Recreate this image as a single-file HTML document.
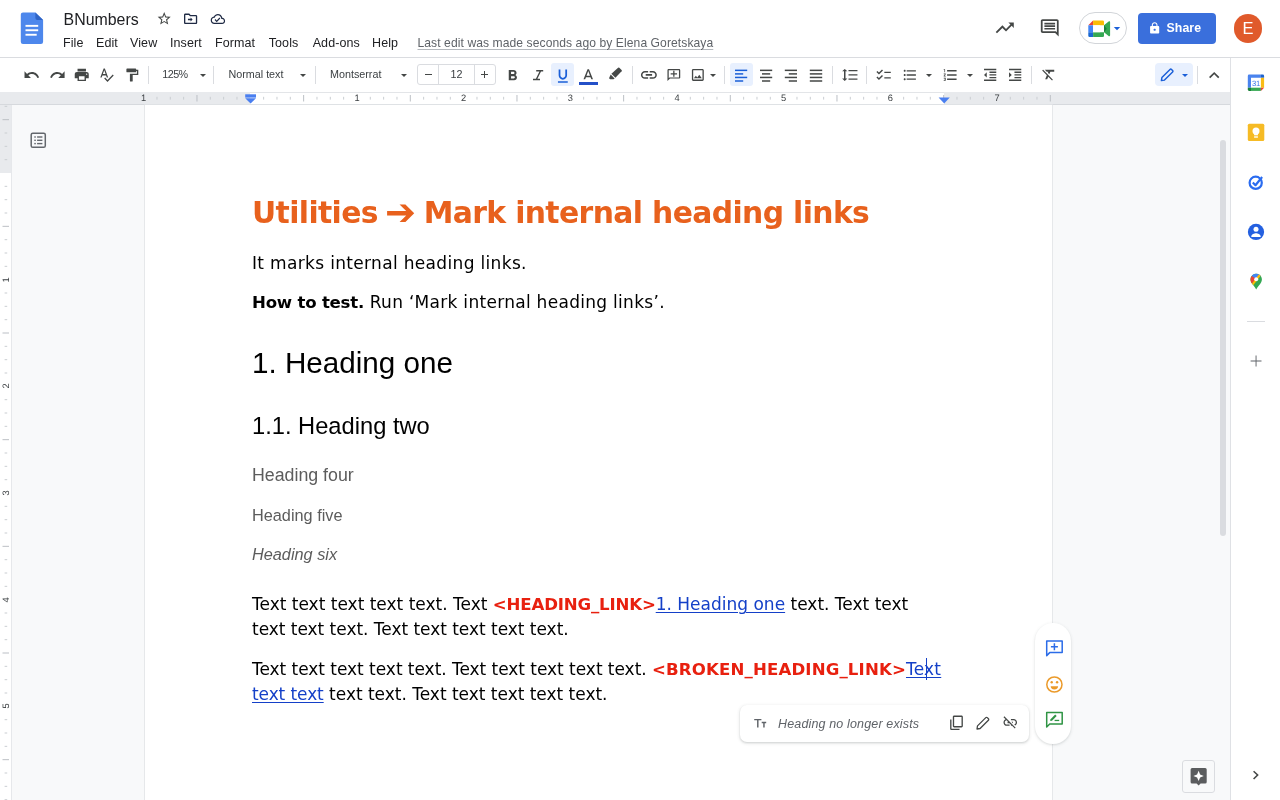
<!DOCTYPE html>
<html lang="en">
<head>
<meta charset="utf-8">
<title>BNumbers - Google Docs</title>
<style>
html,body{margin:0;padding:0;}
body{width:1280px;height:800px;overflow:hidden;position:relative;background:#f8f9fa;font-family:"Liberation Sans",sans-serif;color:#202124;}
#app{position:absolute;left:0;top:0;width:1280px;height:800px;overflow:hidden;will-change:transform;}
.abs{position:absolute;}
svg{position:absolute;overflow:visible;}
/* header */
#header{position:absolute;left:0;top:0;width:1280px;height:57px;background:#fff;border-bottom:1px solid #dadce0;}
#doctitle{position:absolute;left:63.6px;top:10px;font-size:15.9px;line-height:20px;color:#202124;white-space:nowrap;}
.menu{position:absolute;top:35px;font-size:12.5px;letter-spacing:0.1px;line-height:16px;color:#202124;white-space:nowrap;}
#lastedit{position:absolute;left:417.5px;top:35px;font-size:12.1px;letter-spacing:0.08px;line-height:16px;color:#5f6368;white-space:nowrap;text-decoration:underline;text-decoration-color:#b4b8bd;text-decoration-thickness:1.3px;text-underline-offset:2px;}
#share{position:absolute;left:1137.5px;top:12.5px;width:78.3px;height:31.8px;border-radius:4px;background:#3a6fdc;}
#share span{position:absolute;left:29px;top:7.6px;font-size:12.3px;line-height:16px;font-weight:bold;color:#fff;letter-spacing:0.1px;}
#avatar{position:absolute;left:1233.7px;top:14.2px;width:28.6px;height:28.6px;border-radius:50%;background:#e05a2b;color:#fff;font-size:16.4px;line-height:29.6px;text-align:center;}
#meet{position:absolute;left:1078.7px;top:12.4px;width:48px;height:32px;border-radius:16px;border:1px solid #d2d5d9;box-sizing:border-box;background:#fff;}
/* toolbar */
#toolbar{position:absolute;left:0;top:58px;width:1230px;height:34px;background:#fff;}
.tsep{position:absolute;top:8px;width:1px;height:18px;background:#dadce0;}
.ttext{position:absolute;top:9px;font-size:10.75px;line-height:14px;color:#3c4043;white-space:nowrap;}
.caret{position:absolute;top:15.8px;width:0;height:0;border-left:3.2px solid transparent;border-right:3.2px solid transparent;border-top:3.4px solid #444746;}
.hl{position:absolute;top:4px;height:26px;border-radius:3px;background:#e8f0fe;}
#sizebox{position:absolute;left:417px;top:6px;width:79px;height:21px;box-sizing:border-box;border:1px solid #dadce0;border-radius:3px;}
#sizebox i{position:absolute;top:0;width:1px;height:19px;background:#dadce0;}
/* ruler */
#ruler{position:absolute;left:0;top:91.7px;width:1230px;height:12px;background:#e8eaed;border-bottom:1px solid #d6d9dd;}
#rulerwhite{position:absolute;left:250.3px;top:0;width:694px;height:11.2px;background:#fff;border-top:0.8px solid #e3e5e8;}
.rnum{text-rendering:geometricPrecision;position:absolute;top:92.4px;font-size:9.3px;line-height:12px;color:#3c4043;width:20px;text-align:center;}
.vnum{text-rendering:geometricPrecision;position:absolute;left:-4.2px;width:20px;height:20px;font-size:9.3px;line-height:20px;color:#3c4043;text-align:center;transform:rotate(-90deg);}
/* vertical ruler */
#vruler{position:absolute;left:0;top:104.5px;width:11px;height:696px;background:#fff;border-right:1.4px solid #e6e8eb;}
#vrulergray{position:absolute;left:0;top:0;width:11px;height:68.4px;background:#e8eaed;}
/* page */
#page{position:absolute;left:145px;top:105px;width:906.6px;height:695px;background:#fff;box-shadow:0 0 0 0.8px #e2e4e7;}
.doc{position:absolute;left:107px;white-space:nowrap;color:#000;}
.mont{font-family:"DejaVu Sans","Liberation Sans",sans-serif;font-size:17px;line-height:24px;}
.montb{font-family:"DejaVu Sans Condensed","DejaVu Sans","Liberation Sans",sans-serif;font-weight:bold;}
.montw{font-family:"DejaVu Sans","Liberation Sans",sans-serif;font-weight:bold;font-size:16.6px;}
.arial{font-family:"Liberation Sans",sans-serif;}
.red{color:#e8200f;}
.lnk{color:#1440c8;text-decoration:underline;text-decoration-thickness:1px;text-underline-offset:2px;}
/* side panel */
#side{position:absolute;left:1230px;top:58px;width:50px;height:742px;background:#fff;border-left:1px solid #dfe1e5;box-sizing:border-box;}
#scroll{position:absolute;left:1219.6px;top:139.8px;width:6.8px;height:395.8px;border-radius:4px;background:#dadce0;}
#linkpop{position:absolute;left:740px;top:704.500px;width:289px;height:37px;border-radius:7px;background:#fff;box-shadow:0 1px 3px 1px rgba(60,64,67,.10),0 1px 2px rgba(60,64,67,.14);}
#linkpop span{position:absolute;left:38px;top:11.3px;font-size:12.500px;line-height:16px;font-style:italic;color:#5f6368;white-space:nowrap;letter-spacing:0.15px;}
#pill{position:absolute;left:1035px;top:623px;width:36px;height:121px;border-radius:18px;background:#fff;box-shadow:0 1px 3px 1px rgba(60,64,67,.07),0 1px 2px rgba(60,64,67,.10);}
#explore{position:absolute;left:1181.9px;top:760px;width:33px;height:33px;box-sizing:border-box;border:1px solid #dadce0;border-radius:3px;background:#f8f9fa;}
</style>
</head>
<body>
<div id="app">

<div id="header">
  <div id="doctitle">BNumbers</div>
  <div class="menu" style="left:63px">File</div>
  <div class="menu" style="left:96px">Edit</div>
  <div class="menu" style="left:130px">View</div>
  <div class="menu" style="left:170px">Insert</div>
  <div class="menu" style="left:215px">Format</div>
  <div class="menu" style="left:268.7px">Tools</div>
  <div class="menu" style="left:312.7px">Add-ons</div>
  <div class="menu" style="left:372px">Help</div>
  <div id="lastedit">Last edit was made seconds ago by Elena Goretskaya</div>
  <div id="meet"></div>
  <div id="share"><span>Share</span></div>
  <div id="avatar">E</div>
</div>

<div id="toolbar">
  <div class="hl" style="left:551px;top:5px;width:23px;height:23px;"></div>
  <div class="hl" style="left:730px;top:5px;width:23px;height:23px;"></div>
  <div class="hl" style="left:1155px;top:5px;width:38px;height:23px;border-radius:4px;"></div>
  <div class="tsep" style="left:148px"></div>
  <div class="ttext" style="left:162.2px;letter-spacing:-0.5px">125%</div>
  <div class="caret" style="left:199.5px"></div>
  <div class="tsep" style="left:213px"></div>
  <div class="ttext" style="left:228.5px">Normal text</div>
  <div class="caret" style="left:300px"></div>
  <div class="tsep" style="left:315px"></div>
  <div class="ttext" style="left:330px">Montserrat</div>
  <div class="caret" style="left:401.2px"></div>
  <div id="sizebox"><i style="left:20.3px"></i><i style="left:56.3px"></i></div>
  <div class="abs" style="left:424.6px;top:16px;width:7px;height:1.3px;background:#444746;"></div>
  <div class="ttext" style="left:450.6px">12</div>
  <div class="abs" style="left:481.2px;top:16px;width:6.8px;height:1.3px;background:#444746;"></div>
  <div class="abs" style="left:483.95px;top:13.2px;width:1.3px;height:6.8px;background:#444746;"></div>
  <div class="abs" style="left:578.8px;top:23.8px;width:19.2px;height:3px;background:#2450c8;"></div>
  <div class="tsep" style="left:632px"></div>
  <div class="caret" style="left:709.7px"></div>
  <div class="tsep" style="left:724px"></div>
  <div class="tsep" style="left:832px"></div>
  <div class="tsep" style="left:866px"></div>
  <div class="caret" style="left:925.7px"></div>
  <div class="caret" style="left:966.8px"></div>
  <div class="tsep" style="left:1031px"></div>
  <div class="caret" style="left:1181.6px;border-top-color:#1a5fd8;"></div>
  <div class="tsep" style="left:1197px"></div>
</div>

<div id="ruler"><div id="rulerwhite"></div></div>
<div id="vruler"><div id="vrulergray"></div></div>

<div id="page">
  <div class="doc montw" style="top:88px;font-size:29.8px;line-height:40px;color:#e8611d;letter-spacing:-0.62px;">Utilities <span style="font-size:37px;line-height:0;letter-spacing:0;margin:0 -2.2px 0 -2.6px;position:relative;top:1.5px;">➔</span> Mark internal heading links</div>
  <div class="doc mont" style="top:146px;letter-spacing:0.33px;">It marks internal heading links.</div>
  <div class="doc mont" style="top:185px;"><span class="montw" style="letter-spacing:-0.23px;">How to test.</span><span style="letter-spacing:0.29px;"> Run ‘Mark internal heading links’.</span></div>
  <div class="doc arial" style="top:240px;font-size:29.63px;line-height:36px;">1. Heading one</div>
  <div class="doc arial" style="top:306px;font-size:23.7px;line-height:30px;">1.1. Heading two</div>
  <div class="doc arial" style="top:358px;font-size:17.78px;line-height:24px;color:#5c5c5c;">Heading four</div>
  <div class="doc arial" style="top:399px;font-size:16.3px;line-height:22px;color:#5c5c5c;">Heading five</div>
  <div class="doc arial" style="top:438px;font-size:16.3px;line-height:22px;color:#5c5c5c;font-style:italic;">Heading six</div>
  <div class="doc mont" style="top:487px;"><span>Text text text text text. Text </span><span class="montw red" style="letter-spacing:-0.16px;">&lt;HEADING_LINK&gt;</span><span class="lnk">1. Heading one</span><span> text. Text text</span></div>
  <div class="doc mont" style="top:512px;letter-spacing:-0.03px;">text text text. Text text text text text.</div>
  <div class="doc mont" style="top:552px;"><span style="letter-spacing:-0.039px;">Text text text text text. Text text text text text. </span><span class="montw red" style="letter-spacing:0.14px;">&lt;BROKEN_HEADING_LINK&gt;</span><span class="lnk" style="letter-spacing:0.22px;">Text</span></div>
  <div class="doc mont" style="top:577px;"><span class="lnk" style="letter-spacing:-0.09px;">text text</span><span style="letter-spacing:-0.015px;"> text text. Text text text text text.</span></div>
  <div class="abs" style="left:780.8px;top:553.4px;width:1.2px;height:21.5px;background:#1440c8;"></div>
</div>

<svg id="rticks" width="1280" height="800" viewBox="0 0 1280 800" style="left:0;top:0;pointer-events:none;"><rect x="156.47" y="96.8" width="1" height="2.8" fill="#caced2"/><rect x="169.80" y="96.8" width="1" height="2.8" fill="#caced2"/><rect x="183.13" y="96.8" width="1" height="2.8" fill="#caced2"/><rect x="196.47" y="95" width="1" height="6.5" fill="#bcc0c5"/><rect x="209.80" y="96.8" width="1" height="2.8" fill="#caced2"/><rect x="223.13" y="96.8" width="1" height="2.8" fill="#caced2"/><rect x="236.47" y="96.8" width="1" height="2.8" fill="#caced2"/><rect x="263.13" y="96.8" width="1" height="2.8" fill="#caced2"/><rect x="276.47" y="96.8" width="1" height="2.8" fill="#caced2"/><rect x="289.80" y="96.8" width="1" height="2.8" fill="#caced2"/><rect x="303.13" y="95" width="1" height="6.5" fill="#bcc0c5"/><rect x="316.47" y="96.8" width="1" height="2.8" fill="#caced2"/><rect x="329.80" y="96.8" width="1" height="2.8" fill="#caced2"/><rect x="343.13" y="96.8" width="1" height="2.8" fill="#caced2"/><rect x="369.80" y="96.8" width="1" height="2.8" fill="#caced2"/><rect x="383.13" y="96.8" width="1" height="2.8" fill="#caced2"/><rect x="396.47" y="96.8" width="1" height="2.8" fill="#caced2"/><rect x="409.80" y="95" width="1" height="6.5" fill="#bcc0c5"/><rect x="423.13" y="96.8" width="1" height="2.8" fill="#caced2"/><rect x="436.47" y="96.8" width="1" height="2.8" fill="#caced2"/><rect x="449.80" y="96.8" width="1" height="2.8" fill="#caced2"/><rect x="476.47" y="96.8" width="1" height="2.8" fill="#caced2"/><rect x="489.80" y="96.8" width="1" height="2.8" fill="#caced2"/><rect x="503.13" y="96.8" width="1" height="2.8" fill="#caced2"/><rect x="516.47" y="95" width="1" height="6.5" fill="#bcc0c5"/><rect x="529.80" y="96.8" width="1" height="2.8" fill="#caced2"/><rect x="543.13" y="96.8" width="1" height="2.8" fill="#caced2"/><rect x="556.47" y="96.8" width="1" height="2.8" fill="#caced2"/><rect x="583.13" y="96.8" width="1" height="2.8" fill="#caced2"/><rect x="596.47" y="96.8" width="1" height="2.8" fill="#caced2"/><rect x="609.80" y="96.8" width="1" height="2.8" fill="#caced2"/><rect x="623.13" y="95" width="1" height="6.5" fill="#bcc0c5"/><rect x="636.47" y="96.8" width="1" height="2.8" fill="#caced2"/><rect x="649.80" y="96.8" width="1" height="2.8" fill="#caced2"/><rect x="663.13" y="96.8" width="1" height="2.8" fill="#caced2"/><rect x="689.80" y="96.8" width="1" height="2.8" fill="#caced2"/><rect x="703.13" y="96.8" width="1" height="2.8" fill="#caced2"/><rect x="716.47" y="96.8" width="1" height="2.8" fill="#caced2"/><rect x="729.80" y="95" width="1" height="6.5" fill="#bcc0c5"/><rect x="743.13" y="96.8" width="1" height="2.8" fill="#caced2"/><rect x="756.47" y="96.8" width="1" height="2.8" fill="#caced2"/><rect x="769.80" y="96.8" width="1" height="2.8" fill="#caced2"/><rect x="796.47" y="96.8" width="1" height="2.8" fill="#caced2"/><rect x="809.80" y="96.8" width="1" height="2.8" fill="#caced2"/><rect x="823.14" y="96.8" width="1" height="2.8" fill="#caced2"/><rect x="836.47" y="95" width="1" height="6.5" fill="#bcc0c5"/><rect x="849.80" y="96.8" width="1" height="2.8" fill="#caced2"/><rect x="863.14" y="96.8" width="1" height="2.8" fill="#caced2"/><rect x="876.47" y="96.8" width="1" height="2.8" fill="#caced2"/><rect x="903.14" y="96.8" width="1" height="2.8" fill="#caced2"/><rect x="916.47" y="96.8" width="1" height="2.8" fill="#caced2"/><rect x="929.80" y="96.8" width="1" height="2.8" fill="#caced2"/><rect x="943.14" y="95" width="1" height="6.5" fill="#bcc0c5"/><rect x="956.47" y="96.8" width="1" height="2.8" fill="#caced2"/><rect x="969.80" y="96.8" width="1" height="2.8" fill="#caced2"/><rect x="983.14" y="96.8" width="1" height="2.8" fill="#caced2"/><rect x="1009.80" y="96.8" width="1" height="2.8" fill="#caced2"/><rect x="1023.14" y="96.8" width="1" height="2.8" fill="#caced2"/><rect x="1036.47" y="96.8" width="1" height="2.8" fill="#caced2"/><rect x="1049.80" y="95" width="1" height="6.5" fill="#bcc0c5"/><rect x="4.6" y="105.83" width="2.6" height="1" fill="#caced2"/><rect x="2.5" y="119.17" width="6.5" height="1" fill="#bcc0c5"/><rect x="4.6" y="132.50" width="2.6" height="1" fill="#caced2"/><rect x="4.6" y="145.83" width="2.6" height="1" fill="#caced2"/><rect x="4.6" y="159.17" width="2.6" height="1" fill="#caced2"/><rect x="4.6" y="185.83" width="2.6" height="1" fill="#caced2"/><rect x="4.6" y="199.17" width="2.6" height="1" fill="#caced2"/><rect x="4.6" y="212.50" width="2.6" height="1" fill="#caced2"/><rect x="2.5" y="225.83" width="6.5" height="1" fill="#bcc0c5"/><rect x="4.6" y="239.17" width="2.6" height="1" fill="#caced2"/><rect x="4.6" y="252.50" width="2.6" height="1" fill="#caced2"/><rect x="4.6" y="265.83" width="2.6" height="1" fill="#caced2"/><rect x="4.6" y="292.50" width="2.6" height="1" fill="#caced2"/><rect x="4.6" y="305.83" width="2.6" height="1" fill="#caced2"/><rect x="4.6" y="319.17" width="2.6" height="1" fill="#caced2"/><rect x="2.5" y="332.50" width="6.5" height="1" fill="#bcc0c5"/><rect x="4.6" y="345.83" width="2.6" height="1" fill="#caced2"/><rect x="4.6" y="359.17" width="2.6" height="1" fill="#caced2"/><rect x="4.6" y="372.50" width="2.6" height="1" fill="#caced2"/><rect x="4.6" y="399.17" width="2.6" height="1" fill="#caced2"/><rect x="4.6" y="412.50" width="2.6" height="1" fill="#caced2"/><rect x="4.6" y="425.83" width="2.6" height="1" fill="#caced2"/><rect x="2.5" y="439.17" width="6.5" height="1" fill="#bcc0c5"/><rect x="4.6" y="452.50" width="2.6" height="1" fill="#caced2"/><rect x="4.6" y="465.83" width="2.6" height="1" fill="#caced2"/><rect x="4.6" y="479.17" width="2.6" height="1" fill="#caced2"/><rect x="4.6" y="505.83" width="2.6" height="1" fill="#caced2"/><rect x="4.6" y="519.17" width="2.6" height="1" fill="#caced2"/><rect x="4.6" y="532.50" width="2.6" height="1" fill="#caced2"/><rect x="2.5" y="545.83" width="6.5" height="1" fill="#bcc0c5"/><rect x="4.6" y="559.17" width="2.6" height="1" fill="#caced2"/><rect x="4.6" y="572.50" width="2.6" height="1" fill="#caced2"/><rect x="4.6" y="585.83" width="2.6" height="1" fill="#caced2"/><rect x="4.6" y="612.50" width="2.6" height="1" fill="#caced2"/><rect x="4.6" y="625.83" width="2.6" height="1" fill="#caced2"/><rect x="4.6" y="639.17" width="2.6" height="1" fill="#caced2"/><rect x="2.5" y="652.50" width="6.5" height="1" fill="#bcc0c5"/><rect x="4.6" y="665.83" width="2.6" height="1" fill="#caced2"/><rect x="4.6" y="679.17" width="2.6" height="1" fill="#caced2"/><rect x="4.6" y="692.50" width="2.6" height="1" fill="#caced2"/><rect x="4.6" y="719.17" width="2.6" height="1" fill="#caced2"/><rect x="4.6" y="732.50" width="2.6" height="1" fill="#caced2"/><rect x="4.6" y="745.84" width="2.6" height="1" fill="#caced2"/><rect x="2.5" y="759.17" width="6.5" height="1" fill="#bcc0c5"/><rect x="4.6" y="772.50" width="2.6" height="1" fill="#caced2"/><rect x="4.6" y="785.84" width="2.6" height="1" fill="#caced2"/><rect x="4.6" y="799.17" width="2.6" height="1" fill="#caced2"/></svg>
<div class="rnum" style="left:133.6px">1</div>
<div class="rnum" style="left:347.0px">1</div>
<div class="rnum" style="left:453.6px">2</div>
<div class="rnum" style="left:560.3px">3</div>
<div class="rnum" style="left:667.0px">4</div>
<div class="rnum" style="left:773.6px">5</div>
<div class="rnum" style="left:880.3px">6</div>
<div class="rnum" style="left:987.0px">7</div>
<div class="vnum" style="top:269.7px">1</div>
<div class="vnum" style="top:376.3px">2</div>
<div class="vnum" style="top:483.0px">3</div>
<div class="vnum" style="top:589.7px">4</div>
<div class="vnum" style="top:696.3px">5</div>
<div id="scroll"></div>
<div id="side"></div>
<!-- link popup + floating pill + explore (HTML boxes) -->
<div id="linkpop"><span>Heading no longer exists</span></div>
<div id="pill"></div>
<div id="explore"></div>
<div class="abs" style="left:1247px;top:321px;width:18px;height:1px;background:#dadce0;"></div>

<svg id="icons" width="1280" height="800" viewBox="0 0 1280 800" style="left:0;top:0;pointer-events:none;">
<path d="M12.5 8c-2.65 0-5.05.99-6.9 2.6L2 7v9h9l-3.62-3.62c1.39-1.16 3.16-1.88 5.12-1.88 3.54 0 6.55 2.31 7.6 5.5l2.37-.78C21.08 11.03 17.15 8 12.5 8z" fill="#444746" transform="translate(31.80 74.65) scale(0.7115 0.7361) translate(-12.235 -11.500)"/>
<path d="M18.4 10.6C16.55 8.99 14.15 8 11.5 8c-4.65 0-8.58 3.03-9.96 7.22L3.9 16c1.05-3.19 4.05-5.5 7.6-5.5 1.95 0 3.73.72 5.12 1.88L13 16h9V7l-3.6 3.6z" fill="#444746" transform="translate(57.40 74.65) scale(0.7039 0.7342) translate(-11.770 -11.500)"/>
<path d="M19 8H5c-1.66 0-3 1.34-3 3v6h4v4h12v-4h4v-6c0-1.66-1.34-3-3-3zm-3 11H8v-5h8v5zm3-7c-.55 0-1-.45-1-1s.45-1 1-1 1 .45 1 1-.45 1-1 1zm-1-9H6v4h12V3z" fill="#444746" transform="translate(81.75 74.85) scale(0.7006 0.6876) translate(-12.000 -12.000)"/>
<path d="M12.45 16h2.09L9.43 3H7.57L2.46 16h2.09l1.12-3h5.64l1.14 3zm-6.02-5L8.5 5.48 10.57 11H6.43zm15.16.59l-8.09 8.09L9.830 16l-1.410 1.410 5.090 5.090L23 13l-1.410-1.410z" fill="#444746" transform="translate(107.00 75.25) scale(0.6524 0.6822) translate(-12.730 -12.750)"/>
<path d="M18 4V3c0-.55-.45-1-1-1H5c-.55 0-1 .45-1 1v4c0 .55.45 1 1 1h12c.55 0 1-.45 1-1V6h1v4H9v11c0 .55.45 1 1 1h2c.55 0 1-.45 1-1v-9h8V4h-3z" fill="#444746" transform="translate(132.35 75.00) scale(0.6991 0.6621) translate(-12.500 -12.000)"/>
<path d="M15.6 10.79c.97-.67 1.65-1.77 1.65-2.79 0-2.26-1.75-4-4-4H7v14h7.040c2.090 0 3.710-1.700 3.710-3.790 0-1.520-.860-2.820-2.150-3.420zM10 6.500h3c.830 0 1.500.670 1.500 1.500s-.670 1.500-1.500 1.500h-3v-3zm3.500 9H10v-3h3.500c.830 0 1.500.670 1.500 1.500s-.670 1.500-1.500 1.500z" fill="#444746" transform="translate(512.85 75.10) scale(0.7633 0.7371) translate(-12.375 -11.000)"/>
<path d="M12 17c3.310 0 6-2.690 6-6V3h-2.500v8c0 1.930-1.570 3.500-3.500 3.500S8.500 12.930 8.500 11V3H6v8c0 3.310 2.690 6 6 6zm-7 2v2h14v-2H5z" fill="#1a5fd8" transform="translate(562.85 76.10) scale(0.7008 0.7251) translate(-12.000 -12.000)"/>
<path d="M11 3L5.500 17h2.250l1.120-3h6.250l1.120 3h2.250L13 3h-2zm-1.380 9L12 5.670 14.380 12H9.620z" fill="#444746" transform="translate(588.25 74.25) scale(0.7293 0.7234) translate(-11.995 -10.000)"/>
<path d="M3.900 12c0-1.710 1.390-3.100 3.100-3.100h4V7H7c-2.760 0-5 2.240-5 5s2.240 5 5 5h4v-1.900H7c-1.710 0-3.100-1.390-3.100-3.100zM8 13h8v-2H8v2zm9-6h-4v1.900h4c1.710 0 3.100 1.390 3.100 3.100s-1.390 3.100-3.100 3.100h-4V17h4c2.760 0 5-2.240 5-5s-2.240-5-5-5z" fill="#444746" transform="translate(648.90 74.90) scale(0.7960 0.7840) translate(-12.000 -12.000)"/>
<path d="M22 4c0-1.100-.9-2-2-2H4c-1.100 0-2 .9-2 2v12c0 1.100.9 2 2 2h14l4 4V4zm-2 13.170L18.830 16H4V4h16v13.170zM13 5h-2v4H7v2h4v4h2v-4h4V9h-4z" fill="#444746" transform="translate(673.85 75.00) scale(-0.6395 0.5945) translate(-12.000 -12.000)"/>
<path d="M19 5v14H5V5h14m0-2H5c-1.100 0-2 .9-2 2v14c0 1.100.9 2 2 2h14c1.100 0 2-.9 2-2V5c0-1.100-.9-2-2-2zm-4.860 8.860l-3 3.870L9 13.140 6 17h12l-3.860-5.140z" fill="#444746" transform="translate(697.85 74.90) scale(0.6622 0.6656) translate(-12.000 -12.000)"/>
<path d="M6 7h2.500L5 3.500 1.500 7H4v10H1.500L5 20.500 8.500 17H6V7zm4-2v2h12V5H10zm0 14h12v-2H10v2zm0-6h12v-2H10v2z" fill="#444746" transform="translate(849.80 74.90) scale(0.7473 0.7072) translate(-11.750 -12.000)"/>
<path d="M22 7h-9v2h9V7zm0 8h-9v2h9v-2zM5.540 11L2 7.460l1.410-1.410 2.120 2.120 4.240-4.240 1.410 1.410L5.540 11zm0 8L2 15.460l1.410-1.410 2.120 2.120 4.240-4.240 1.410 1.410L5.540 19z" fill="#444746" transform="translate(883.60 74.70) scale(0.7192 0.6873) translate(-12.000 -11.465)"/>
<path d="M4 10.500c-.830 0-1.500.670-1.500 1.500s.670 1.500 1.500 1.500 1.500-.670 1.500-1.500-.670-1.500-1.500-1.500zm0-6c-.830 0-1.500.670-1.500 1.500S3.170 7.500 4 7.500 5.500 6.830 5.500 6 4.830 4.500 4 4.500zm0 12c-.830 0-1.500.680-1.500 1.500s.680 1.500 1.500 1.500 1.500-.680 1.500-1.500-.670-1.500-1.500-1.500zM7 19h14v-2H7v2zm0-6h14v-2H7v2zm0-8v2h14V5H7z" fill="#444746" transform="translate(909.80 75.00) scale(0.6600 0.6948) translate(-11.750 -12.000)"/>
<path d="M2 17h2v.5H3v1h1v.5H2v1h3v-4H2v1zm1-9h1V4H2v1h1v3zm-1 3h1.800L2 13.100v.9h3v-1H3.200L5 10.900V10H2v1zm5-6v2h14V5H7zm0 14h14v-2H7v2zm0-6h14v-2H7v2z" fill="#444746" transform="translate(950.15 75.00) scale(0.6771 0.7035) translate(-11.500 -12.000)"/>
<path d="M11 17h10v-2H11v2zm-8-5l4 4V8l-4 4zm0 9h18v-2H3v2zM3 3v2h18V3H3zm8 6h10V7H11v2zm0 4h10v-2H11v2z" fill="#444746" transform="translate(990.15 74.90) scale(0.6800 0.6700) translate(-12.000 -12.000)"/>
<path d="M3 21h18v-2H3v2zM3 8v8l4-4-4-4zm8 9h10v-2H11v2zM3 3v2h18V3H3zm8 6h10V7H11v2zm0 4h10v-2H11v2z" fill="#444746" transform="translate(1015.15 74.90) scale(0.6800 0.6700) translate(-12.000 -12.000)"/>
<path d="M3.270 5L2 6.270l6.970 6.970L6.500 19h3l1.570-3.660L16.730 21 18 19.730 3.550 5.270 3.270 5zM6 5v.180L8.820 8h2.400l-.720 1.680 2.100 2.100L14.210 8H20V5H6z" fill="#444746" transform="translate(1048.20 75.10) scale(0.6708 0.6833) translate(-11.000 -13.000)"/>
<path d="M12 8l-6 6 1.410 1.410L12 10.830l4.590 4.580L18 14z" fill="#444746" transform="translate(1214.20 75.10) scale(0.8606 0.8426) translate(-12.000 -11.705)"/>
<path d="M22 9.240l-7.190-.620L12 2 9.190 8.630 2 9.240l5.460 4.730L5.820 21 12 17.270 18.180 21l-1.630-7.030L22 9.240zM12 15.400l-3.760 2.270 1-4.280-3.320-2.880 4.380-.380L12 6.100l1.710 4.040 4.380.380-3.320 2.880 1 4.280L12 15.400z" fill="#444746" transform="translate(164.20 18.30) scale(0.6526 0.6605) translate(-12.000 -11.500)"/>
<path d="M20 6h-8l-2-2H4c-1.100 0-2 .9-2 2v12c0 1.100.9 2 2 2h16c1.100 0 2-.9 2-2V8c0-1.100-.9-2-2-2zm0 12H4V6h5.170l2 2H20v10zm-7.990-2.010L12 14H8v-2h4.010v-2L15 13l-2.990 2.990z" fill="#1f2a44" transform="translate(190.60 18.85) scale(0.6592 0.6570) translate(-12.000 -12.000)"/>
<path d="M19.350 10.040C18.670 6.590 15.640 4 12 4 9.110 4 6.600 5.640 5.350 8.040 2.340 8.360 0 10.910 0 14c0 3.310 2.690 6 6 6h13c2.760 0 5-2.240 5-5 0-2.640-2.050-4.780-4.650-4.960zM19 18H6c-2.210 0-4-1.790-4-4 0-2.050 1.530-3.760 3.560-3.970l1.070-.110.500-.950C8.080 7.140 9.940 6 12 6c2.620 0 4.880 1.860 5.390 4.430l.300 1.500 1.530.110c1.560.100 2.780 1.410 2.780 2.960 0 1.650-1.350 3-3 3zm-9-3.820l-2.090-2.090L6.500 13.500 10 17l6.010-6.010-1.410-1.410z" fill="#1f2a44" transform="translate(217.90 19.05) scale(0.5995 0.6232) translate(-12.000 -12.000)"/>
<path d="M16 6l2.290 2.290-4.880 4.880-4-4L2 16.590 3.410 18l6-6 4 4 6.300-6.290L22 12V6z" fill="#444746" transform="translate(1004.75 27.90) scale(0.9040 0.9010) translate(-12.000 -12.000)"/>
<path d="M21.990 4c0-1.100-.890-2-1.990-2H4c-1.100 0-2 .9-2 2v12c0 1.100.9 2 2 2h14l4 4-.010-18zM20 4v13.170L18.830 16H4V4h16zM6 12h12v2H6zm0-3h12v2H6zm0-3h12v2H6z" fill="#444746" transform="translate(1049.75 27.90) scale(0.8918 0.8528) translate(-12.000 -12.000)"/>
<path d="M18 8h-1V6c0-2.760-2.240-5-5-5S7 3.240 7 6v2H6c-1.100 0-2 .9-2 2v10c0 1.100.9 2 2 2h12c1.100 0 2-.9 2-2V10c0-1.100-.9-2-2-2zm-6 9c-1.100 0-2-.9-2-2s.9-2 2-2 2 .9 2 2-.9 2-2 2zm3.100-9H8.900V6c0-1.710 1.390-3.100 3.100-3.100 1.710 0 3.100 1.390 3.100 3.100v2z" fill="#ffffff" transform="translate(1154.65 27.85) scale(0.5705 0.5389) translate(-12.000 -11.500)"/>
<path d="M16 1H4c-1.100 0-2 .9-2 2v14h2V3h12V1zm3 4H8c-1.100 0-2 .9-2 2v14c0 1.100.9 2 2 2h11c1.100 0 2-.9 2-2V7c0-1.100-.9-2-2-2zm0 16H8V7h11v14z" fill="#444746" transform="translate(956.50 722.80) scale(0.6698 -0.6583) translate(-11.500 -12.000)"/>
<path d="M17 7h-4v1.900h4c1.710 0 3.100 1.390 3.100 3.100 0 1.430-.980 2.630-2.310 2.980l1.460 1.460C20.880 15.610 22 13.950 22 12c0-2.760-2.240-5-5-5zm-1 4h-2.190l2 2H16zM2 4.270l3.110 3.110C3.290 8.120 2 9.910 2 12c0 2.760 2.240 5 5 5h4v-1.900H7c-1.710 0-3.100-1.390-3.100-3.100 0-1.590 1.210-2.900 2.760-3.070L8.730 11H8v2h2.730L13 15.270V17h1.730l4.010 4L20 19.740 3.270 3 2 4.270z" fill="#444746" transform="translate(1010.25 722.45) scale(0.6767 0.6817) translate(-12.000 -12.000)"/>
<path d="M19 12.600h-6.400V19h-1.200v-6.400H5v-1.200h6.400V5h1.200v6.400H19v1.200z" fill="#5f6368" transform="translate(1256.05 361.05) scale(0.7786 0.7786) translate(-12.000 -12.000)"/>
<path d="M10 6L8.590 7.410 13.170 12l-4.580 4.590L10 18l6-6z" fill="#444746" transform="translate(1255.90 775.05) scale(0.7710 0.7363) translate(-12.295 -12.000)"/>
</svg>
<svg id="custom" width="1280" height="800" viewBox="0 0 1280 800" style="left:0;top:0;pointer-events:none;">
  <!-- docs logo -->
  <g>
    <path d="M23 12.4h12.4l7.7 7.7v21.6a2.2 2.2 0 0 1-2.200 2.200H23a2.200 2.200 0 0 1-2.200-2.200V14.600a2.200 2.200 0 0 1 2.200-2.200z" fill="#4d87ec"/>
    <path d="M35.400 12.400l7.700 7.700h-5.700a2 2 0 0 1-2-2z" fill="#2f64c6"/>
    <rect x="25.500" y="24.900" width="12.700" height="1.900" fill="#fff"/>
    <rect x="25.500" y="29.300" width="12.700" height="1.900" fill="#fff"/>
    <rect x="25.500" y="33.800" width="11.200" height="1.900" fill="#fff"/>
  </g>
  <!-- meet logo -->
  <g>
    <path d="M1088.300 25.300l4.800-4.800v4.800z" fill="#ea4335"/>
    <path d="M1093.100 20.500h9.600a1.300 1.300 0 0 1 1.300 1.300v3.500h-10.900z" fill="#fbbc04"/>
    <path d="M1088.300 25.300h4.800v6.900h-4.800z" fill="#4285f4"/>
    <path d="M1088.300 32.200h4.800v4.800h-3.500a1.300 1.300 0 0 1-1.300-1.300z" fill="#1967d2"/>
    <path d="M1093.100 32.200h10.900v3.500a1.300 1.300 0 0 1-1.300 1.300h-9.600z" fill="#34a853"/>
    <path d="M1104 25.300l4.600-3.800a.9.900 0 0 1 1.500.7v13.100a.9.900 0 0 1-1.500.7l-4.600-3.800z" fill="#34a853"/>
    <path d="M1104 25.300l2.800 3.450-2.800 3.450z" fill="#188038"/>
    <rect x="1093.100" y="25.300" width="7.100" height="6.900" fill="#fff"/>
    <path d="M1113.800 26.900h6.400l-3.200 3.300z" fill="#1a5fd8"/>
  </g>
  <!-- italic -->
  <g stroke="#444746" stroke-width="1.45" fill="none">
    <path d="M536.200 70.700h7M533 79.500h7M540.600 70.700l-4.300 8.800"/>
  </g>
  <!-- highlighter -->
  <g fill="#444746">
    <path d="M618.100 67.800a.9.900 0 0 1 1.200 0l2.300 2.300a.9.900 0 0 1 0 1.200l-6.200 6.500-4-4z"/>
    <path d="M610.700 74.600l3.900 3.900-1.100.8h-3.300l-1.200-1.100z"/>
  </g>
  <!-- outline icon -->
  <rect x="31.200" y="133.200" width="14.100" height="14.100" rx="1.600" fill="none" stroke="#63676c" stroke-width="1.500"/>
  <g fill="#63676c">
    <rect x="34.300" y="136.300" width="1.500" height="1.400"/><rect x="37.100" y="136.300" width="5.300" height="1.400"/>
    <rect x="34.300" y="139.600" width="1.500" height="1.400"/><rect x="37.100" y="139.600" width="5.300" height="1.400"/>
    <rect x="34.300" y="142.900" width="1.500" height="1.400"/><rect x="37.100" y="142.900" width="5.300" height="1.400"/>
  </g>
  <!-- text-fields icon -->
  <g stroke="#5f6368" stroke-width="1.450" fill="none">
    <path d="M754.200 719.600h7.200M757.800 719.600v8M761.700 722.500h4.500M763.950 722.500v5.100"/>
  </g>
  <!-- pencils (outlined) -->
  <g fill="none" stroke-width="1.300" stroke-linejoin="round">
    <path d="M977 729l.5-3.100 8.300-8.300a1.050 1.050 0 0 1 1.500 0l1.100 1.100a1.050 1.050 0 0 1 0 1.500l-8.300 8.300z" stroke="#444746"/>
    <path d="M1161.400 80.600l.5-3.100 8.100-8.100a1.050 1.050 0 0 1 1.500 0l1.100 1.100a1.050 1.050 0 0 1 0 1.500l-8.100 8.100z" stroke="#1a5fd8" stroke-width="1.450"/>
  </g>
  <!-- align icons -->
  <g fill="#1a5fd8">
    <rect x="735" y="69.600" width="12.200" height="1.500"/><rect x="735" y="73.150" width="8.200" height="1.500"/>
    <rect x="735" y="76.700" width="12.200" height="1.500"/><rect x="735" y="80.250" width="8.200" height="1.500"/>
  </g>
  <g fill="#444746">
    <rect x="760" y="69.600" width="12.200" height="1.500"/><rect x="762" y="73.150" width="8.200" height="1.500"/>
    <rect x="760" y="76.700" width="12.200" height="1.500"/><rect x="762" y="80.250" width="8.200" height="1.500"/>
    <rect x="784.800" y="69.600" width="12.200" height="1.500"/><rect x="788.800" y="73.150" width="8.200" height="1.500"/>
    <rect x="784.800" y="76.700" width="12.200" height="1.500"/><rect x="788.800" y="80.250" width="8.200" height="1.500"/>
    <rect x="809.800" y="69.600" width="12.400" height="1.500"/><rect x="809.800" y="73.150" width="12.400" height="1.500"/>
    <rect x="809.800" y="76.700" width="12.400" height="1.500"/><rect x="809.800" y="80.250" width="12.400" height="1.500"/>
  </g>
  <!-- ruler markers -->
  <g fill="#4a7ff0">
    <rect x="245.200" y="94.300" width="10.800" height="3.300"/>
    <path d="M245.200 98.300h10.800l-5.400 5.200z"/>
    <path d="M938.600 97.600h11.200l-5.600 5.900z"/>
  </g>
  <!-- calendar -->
  <g>
    <rect x="1251" y="77.800" width="9.900" height="9.900" fill="#fff"/>
    <path d="M1249.100 74.600h11.800v3.200h-9.900v9.900h-3.200V75.900a1.300 1.300 0 0 1 1.300-1.300z" fill="#4a83ee"/>
    <path d="M1260.900 74.600h1.900a1.300 1.300 0 0 1 1.300 1.300v1.900h-3.200z" fill="#1c62cf"/>
    <rect x="1260.900" y="77.800" width="3.200" height="9.900" fill="#f9bc15"/>
    <rect x="1251" y="87.700" width="9.900" height="3.200" fill="#36a852"/>
    <path d="M1247.800 87.700h3.200v3.200h-1.900a1.300 1.300 0 0 1-1.300-1.300z" fill="#1a8039"/>
    <path d="M1260.900 87.700h3.200l-3.200 3.200z" fill="#e84335"/>
    <text x="1255.900" y="85.500" font-family="Liberation Sans, sans-serif" font-size="7.600" fill="#3b78e7" text-anchor="middle" letter-spacing="-0.250" text-rendering="geometricPrecision">31</text>
  </g>
  <!-- keep -->
  <g>
    <rect x="1247.800" y="123.800" width="16.500" height="17.200" rx="1.500" fill="#f6bb25"/>
    <circle cx="1256" cy="130.900" r="3.500" fill="#fff"/>
    <rect x="1254.100" y="133.300" width="3.800" height="2" fill="#fff"/>
    <rect x="1254.100" y="136.300" width="3.800" height="1.400" fill="#fff"/>
  </g>
  <!-- tasks -->
  <g>
    <circle cx="1255.700" cy="182.800" r="6.100" fill="none" stroke="#2a6cf0" stroke-width="2.200"/>
    <path d="M1259.300 174.800l4.400 2.100-3 2.700z" fill="#fff"/>
    <path d="M1252.800 182.500l2.700 2.700 6.600-8.200" fill="none" stroke="#2a6cf0" stroke-width="2.200" stroke-linejoin="round"/>
  </g>
  <!-- contacts -->
  <g>
    <circle cx="1256" cy="231.900" r="8.100" fill="#2460e0"/>
    <circle cx="1256" cy="229.300" r="2.500" fill="#fff"/>
    <path d="M1251.300 236.600c0-2.300 3.100-3.300 4.700-3.300s4.700 1 4.700 3.300v.5h-9.400z" fill="#fff"/>
  </g>
  <!-- maps pin -->
  <g>
    <path d="M1256.200 273.800c3.200 0 5.700 2.500 5.700 5.600 0 2.300-1.300 4-2.800 5.800-1.300 1.600-2.300 2.900-2.900 4.300-.6-1.400-1.600-2.700-2.900-4.300-1.500-1.800-2.800-3.500-2.800-5.800 0-3.100 2.500-5.600 5.700-5.600z" fill="#34a853"/>
    <path d="M1256.200 273.800c1.800 0 3.300.8 4.400 2l-4.400 5.200-4.500-5c1-1.300 2.700-2.200 4.500-2.200z" fill="#4285f4"/>
    <path d="M1251.700 276c-.8.900-1.200 2.100-1.200 3.400 0 1.600.6 2.900 1.500 4.200l4.200-4.900z" fill="#ea4335"/>
    <path d="M1252 283.600c.4.500.8 1.100 1.300 1.600l7.300-9.400c-.5-.6-1.100-1-1.800-1.400z" fill="#fbbc04"/>
    <circle cx="1256.200" cy="279.300" r="2" fill="#fff"/>
  </g>
  <!-- floating pill icons -->
  <g fill="none" stroke-width="1.500">
    <path d="M1046.700 641h15.500v11.600h-12.500l-3 3z" stroke="#2b6ce8" stroke-linejoin="round"/>
    <path d="M1054.400 643.300v7M1050.900 646.800h7" stroke="#2b6ce8"/>
    <circle cx="1054.400" cy="684.500" r="7.600" stroke="#eb9a2a"/>
    <path d="M1046.700 712.400h15.500v11.600h-12.500l-3 3z" stroke="#2f9444" stroke-linejoin="round"/>
  </g>
  <circle cx="1051.700" cy="682.300" r="1.200" fill="#eb9a2a"/><circle cx="1057.100" cy="682.300" r="1.200" fill="#eb9a2a"/>
  <path d="M1050.700 686.300h7.400a3.700 3.100 0 0 1-7.400 0z" fill="#eb9a2a"/>
  <path d="M1050.200 721.100l.3-1.800 4.700-4.700 1.500 1.500-4.700 4.700z" fill="#2f9444"/>
  <rect x="1054.600" y="719.800" width="4.600" height="1.300" fill="#2f9444"/>
  <!-- explore icon -->
  <path transform="translate(-0.600 0)" d="M1192.700 768h13.100a1.500 1.500 0 0 1 1.500 1.500v12.600a1.500 1.500 0 0 1-1.500 1.500h-4.600l-2 2-2-2h-4.500a1.500 1.500 0 0 1-1.500-1.500v-12.600a1.500 1.500 0 0 1 1.500-1.500z" fill="#5a5c5e"/>
  <path transform="translate(-0.600 0)" d="M1199.200 770.700l1.500 3.700 3.700 1.500-3.700 1.500-1.500 3.700-1.500-3.700-3.700-1.500 3.700-1.500z" fill="#fff"/>
</svg>


</div>
</body>
</html>
